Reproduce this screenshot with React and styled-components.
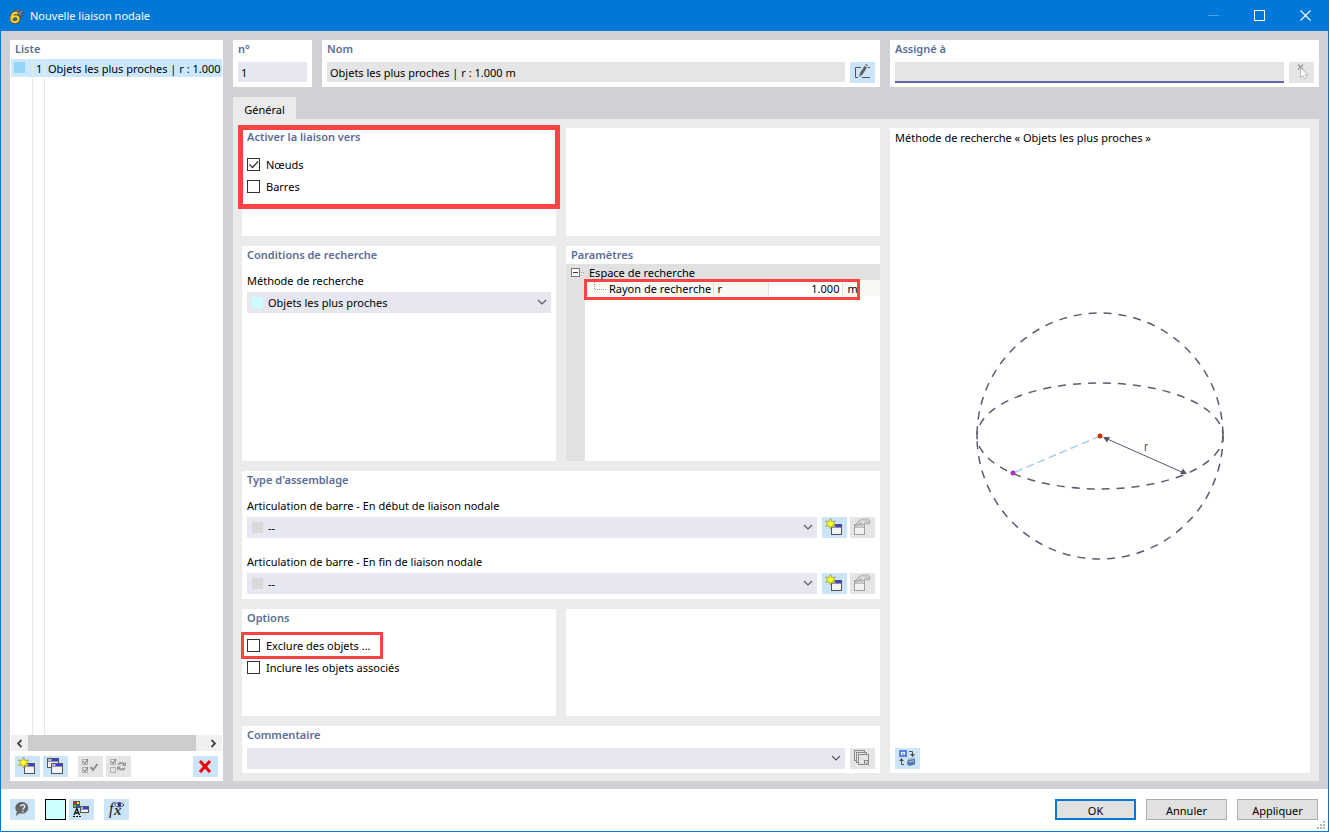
import React from 'react';
import styled, { createGlobalStyle } from 'styled-components';

const GlobalStyle = createGlobalStyle`
  * {
    box-sizing: border-box;
  }

  body {
    margin: 0;
    background: #ffffff;
  }

  body,
  button,
  input,
  select {
    font-family: 'Noto Sans', 'Open Sans', sans-serif;
    font-size: 11px;
    color: #000000;
  }
`;

const Window = styled.div`
  position: relative;
  display: flex;
  flex-direction: column;
  min-width: 960px;
  min-height: 100vh;
  border: 1px solid #0078d7;
  background: #ffffff;
`;

const TitleBar = styled.header`
  display: flex;
  align-items: center;
  height: 30px;
  padding-left: 8px;
  background: #0078d7;
  color: #ffffff;
`;

const WindowTitle = styled.h1`
  flex: 1;
  margin: 0 0 0 5px;
  padding-bottom: 2px;
  font-size: 11px;
  font-weight: normal;
`;

const CaptionButton = styled.button`
  width: 46px;
  height: 30px;
  padding: 0;
  border: 0;
  background: transparent;
  opacity: ${(props) => (props.disabled ? 0.3 : 1)};
`;

const Workspace = styled.div`
  flex: 1;
  display: grid;
  grid-template-columns: 213px minmax(0, 1fr);
  gap: 10px;
  padding: 9px 9px 8px;
  background: #d1d0d5;
`;

const Panel = styled.section`
  position: relative;
  display: flex;
  flex-direction: column;
  min-width: 0;
  padding: 0 5px ${(props) => props.$bottom || 5}px;
  background: #ffffff;
`;

const PanelTitle = styled.h2`
  margin: 0;
  line-height: 18px;
  font-size: 11px;
  font-weight: 600;
  color: #5b6d95;
`;

/* List of links on the left */

const ListPanel = styled(Panel)`
  padding: 0 1px 4px;
`;

const ListTitle = styled(PanelTitle)`
  padding: 0 4px 1px;
`;

const ListRow = styled.div`
  display: grid;
  grid-template-columns: 22px 12px minmax(0, 1fr);
  height: ${(props) => (props.$filler ? 'auto' : '18px')};
  flex: ${(props) => (props.$filler ? 1 : 'none')};
  background: ${(props) => (props.$selected ? '#cce8ff' : '#ffffff')};
  line-height: 20px;
`;

const ListCell = styled.span`
  overflow: hidden;
  padding-left: 3px;
  border-right: 1px solid #e8e8e8;
  white-space: nowrap;

  &:last-child {
    border-right: 0;
  }
`;

const ScrollBar = styled.div`
  display: flex;
  height: 16px;
  margin-bottom: 1px;
  background: #f0f0f0;
`;

const ScrollArrow = styled.button`
  display: flex;
  align-items: center;
  justify-content: center;
  width: 17px;
  padding: 0;
  border: 0;
  background: transparent;
`;

const ScrollTrack = styled.div`
  flex: 1;
`;

const ScrollThumb = styled.div`
  width: 95%;
  height: 100%;
  background: #cdcdcd;
`;

const Toolbar = styled.div`
  display: flex;
  gap: 3px;
  padding: 4px 4px 0;
`;

const Spacer = styled.div`
  flex: ${(props) => (props.$width ? 'none' : 1)};
  width: ${(props) => props.$width || 0}px;
`;

const ToolButton = styled.button`
  flex: none;
  display: block;
  width: 25px;
  height: 21px;
  padding: 0;
  border: 0;
  background: ${(props) => (props.disabled ? '#e5e5e5' : '#cce4f7')};

  svg {
    display: block;
  }
`;

const Swatch = styled.span`
  display: block;
  width: 11px;
  height: 11px;
  margin-top: 3px;
  background: ${(props) => props.$color};
`;

/* Right side */

const Main = styled.main`
  display: flex;
  flex-direction: column;
  min-width: 0;
`;

const HeaderRow = styled.div`
  display: grid;
  grid-template-columns: 79px minmax(0, 558fr) minmax(0, 429fr);
  gap: 10px;
`;

const FieldRow = styled.div`
  display: flex;
  gap: 5px;
  margin-top: ${(props) => (props.$flush ? 0 : 4)}px;
`;

const ButtonPair = styled.div`
  display: flex;
  gap: 3px;
`;

const TextInput = styled.input`
  flex: 1;
  min-width: 0;
  width: 100%;
  height: 20px;
  padding: 1px 3px;
  border: 0;
  border-radius: 0;
  outline: 0;
  background: ${(props) => (props.$muted ? '#e5e5e5' : '#e7e7f2')};
`;

const AssignedInput = styled(TextInput)`
  height: 21px;
  border-bottom: 2px solid #6463ae;
`;

const TabBar = styled.div`
  display: flex;
  margin-top: 10px;
`;

const Tab = styled.button`
  width: 63px;
  height: 22px;
  padding: 3px 0 0;
  border: 0;
  background: #ebebeb;
`;

const TabBody = styled.div`
  flex: 1;
  display: grid;
  grid-template-columns: minmax(0, 638fr) minmax(0, 420fr);
  gap: 10px;
  padding: 9px 9px 8px;
  background: #ebebeb;
`;

const Settings = styled.div`
  display: grid;
  grid-template-columns: repeat(2, minmax(0, 1fr));
  grid-template-rows: 108px minmax(120px, 1fr) auto 107px auto;
  gap: 10px;
`;

const WidePanel = styled(Panel)`
  grid-column: span 2;
`;

const CheckList = styled.div`
  display: flex;
  flex-direction: column;
  align-items: flex-start;
  padding-top: 7px;
`;

const CheckLabel = styled.label`
  position: relative;
  display: flex;
  align-items: center;
  gap: 6px;
  height: 22px;
`;

const CheckWrap = styled.span`
  display: grid;

  > * {
    grid-area: 1 / 1;
  }

  svg {
    pointer-events: none;
    visibility: hidden;
  }

  input:checked + svg {
    visibility: visible;
  }
`;

const CheckInput = styled.input`
  appearance: none;
  width: 13px;
  height: 13px;
  margin: 0;
  border: 1px solid #333333;
  background: #ffffff;
`;

const FieldLabel = styled.label`
  display: block;
  margin-top: ${(props) => props.$top || 6}px;
  line-height: 22px;
`;

const SelectWrap = styled.div`
  position: relative;
  flex: 1;
  min-width: 0;
`;

const SelectBox = styled.select`
  appearance: none;
  display: block;
  width: 100%;
  height: 21px;
  padding: 0 20px 0 21px;
  border: 0;
  border-radius: 0;
  outline: 0;
  background: #e7e7f2;
`;

const SelectSwatch = styled.span`
  position: absolute;
  top: 5px;
  left: 5px;
  width: 11px;
  height: 11px;
  background: ${(props) => props.$color};
  pointer-events: none;
`;

const SelectArrow = styled.svg`
  position: absolute;
  top: 7px;
  right: 4px;
  pointer-events: none;
`;

const Highlight = styled.span`
  position: absolute;
  inset: ${(props) => props.$inset};
  height: ${(props) => props.$height || 'auto'};
  border: ${(props) => props.$width || 3}px solid #ff4343;
  pointer-events: none;
`;

/* Parameter tree */

const ParamPanel = styled(Panel)`
  padding: 0;
`;

const ParamTitle = styled(PanelTitle)`
  padding-left: 5px;
`;

const ParamBody = styled.div`
  flex: 1;
  display: flex;
`;

const Gutter = styled.div`
  width: 19px;
  padding: 4px 0 0 5px;
  background: #e1e1e1;
`;

const ExpandButton = styled.button`
  display: block;
  padding: 0;
  border: 0;
  background: transparent;

  svg {
    display: block;
  }
`;

const ParamTableWrap = styled.div`
  position: relative;
  flex: 1;
  min-width: 0;
`;

const ParamTable = styled.table`
  width: 100%;
  border-collapse: collapse;
  table-layout: fixed;
  line-height: 15px;

  th,
  td {
    height: 16px;
    padding: 1px 4px 0;
    font-weight: normal;
    text-align: left;
    white-space: nowrap;
  }
`;

const GroupHead = styled.th`
  background: #e1e1e1;
`;

const ParamCell = styled.td`
  && {
    padding: ${(props) => (props.$name ? '1px 0 0 3px' : '1px 3px 0 4px')};
    text-align: ${(props) => (props.$right ? 'right' : 'left')};
  }
  border-right: ${(props) => (props.$last ? '0' : '1px solid #e1e1e1')};
  background: ${(props) => (props.$right ? '#ffffff' : '#f9f9f3')};
`;

const NameColumn = styled.col`
  width: 128px;
`;

const SymbolColumn = styled.col`
  width: 55px;
`;

const UnitColumn = styled.col`
  width: 37px;
`;

const TreeLine = styled.svg`
  margin: 0 3px 0 6px;
  vertical-align: top;
`;

/* Preview */

const PreviewTitle = styled.p`
  margin: 0;
  line-height: 20px;
`;

const Diagram = styled.div`
  flex: 1;
  display: flex;
  align-items: center;
  justify-content: center;
  padding-bottom: 24px;
`;

/* Footer */

const Footer = styled.footer`
  display: flex;
  align-items: center;
  gap: 10px;
  padding: 10px 10px 11px 9px;
`;

const ColorButton = styled.button`
  width: 21px;
  height: 21px;
  padding: 0;
  border: 1px solid #000000;
  background: #ccffff;
`;

const DialogButton = styled.button`
  width: 81px;
  height: 21px;
  padding: 1px 0 0;
  border: ${(props) => (props.$primary ? '2px solid #0078d7' : '1px solid #adadad')};
  background: #e1e1e1;
`;

const Grip = styled.svg`
  position: absolute;
  right: 3px;
  bottom: 2px;
`;

const Icon = ({ children }) => (
  <svg width="25" height="21" viewBox="0 0 25 21" fill="none" aria-hidden="true">
    {children}
  </svg>
);

const MiniWindow = ({ x, y, w = 11, h = 11, color = '#555555', bar = '#3a3ae8' }) => (
  <g>
    <rect x={x + 0.5} y={y + 0.5} width={w - 1} height={h - 1} fill="#f2f2f2" stroke={color} />
    <rect x={x + 1} y={y + 1} width={w - 2} height="2" fill="#b8bcd8" />
    <rect x={x + w / 2 - 1.5} y={y + 1} width={w / 2 + 0.5} height="2" fill={bar} />
    <rect x={x + 1} y={y + 3} width={w - 2} height="1" fill={color} fillOpacity="0.6" />
  </g>
);

const NewIcon = () => (
  <Icon>
    <MiniWindow x={9} y={7} />
    <path
      d="M8.500 1.500l1.400 3 3.600-.4-2.200 2.600 2.200 2.600-3.600-.4-1.400 3-1.400-3-3.600.4 2.200-2.600-2.200-2.600 3.600.4z"
      fill="#ffff20"
      stroke="#94944a"
      strokeWidth="0.8"
    />
  </Icon>
);

const CopyIcon = () => (
  <Icon>
    <MiniWindow x={4} y={2} w={12} h={10} />
    <MiniWindow x={8} y={7} w={12} h={11} />
  </Icon>
);

const CheckAllIcon = () => (
  <Icon>
    <path d="M4.500 3.500h5v5h-5zM4.500 11.500h5v5h-5z" stroke="#aaaaaa" />
    <path d="M5.500 5.500l1.500 2 3-4.500M5.500 13.500l1.500 2 3-4.500" stroke="#6d6d6d" />
    <path d="M12.500 11l2.500 3 4.500-6" stroke="#8c8c8c" strokeWidth="2" />
  </Icon>
);

const CheckToggleIcon = () => (
  <Icon>
    <path d="M4.500 3.500h5v5h-5zM4.500 11.500h5v5h-5z" stroke="#b0b0b0" />
    <path d="M5.500 5.500l1.500 2 3-4.500" stroke="#6d6d6d" />
    <path d="M12 8.500c2-2 4.500-2 7 0M19 12c-2 2-4.500 2-7 0" stroke="#9a9a9a" strokeWidth="1.800" />
    <path d="M20 6v4h-4zM11 14.500v-4h4z" fill="#9a9a9a" />
  </Icon>
);

const DeleteIcon = () => (
  <Icon>
    <path d="M7 5l10 11M17 5L7 16" stroke="#f00000" strokeWidth="3" />
  </Icon>
);

const RenameIcon = () => (
  <Icon>
    <path d="M11 5.500H5.500v10H8M18 5.500h2M12 15.500h8" stroke="#555555" />
    <path d="M9 15l1-4 4.500-7 2.500 1.500L12.500 12.500z" fill="#5f5f5f" />
    <path d="M15 3l1-1 2 1-.5 1.500z" fill="#777777" />
  </Icon>
);

const PickIcon = () => (
  <Icon>
    <path d="M9 2.500l5 5M14 2.500l-5 5" stroke="#999999" strokeWidth="1.500" />
    <path
      d="M11.500 5.500v10l2.500-2 1.500 3.500 2-1-1.500-3.200h3z"
      fill="#fafafa"
      stroke="#b0b0b0"
      strokeWidth="0.8"
    />
  </Icon>
);

const EditLibraryIcon = () => (
  <Icon>
    <MiniWindow x={4} y={7} color="#a0a0a0" bar="#d0d0d0" />
    <path d="M6 7l3-3.500 4-1.500h5l2 2v3h-3l-2-1-3 3-1.500-1 1-2-4 2z" fill="#c9c9c9" stroke="#a3a3a3" strokeWidth="0.7" />
    <path d="M10 5l4-1M12 7l3-3" stroke="#eeeeee" />
  </Icon>
);

const NotesIcon = () => (
  <Icon>
    <g fill="#e5e5e5" stroke="#8a8a8a">
      <rect x="4.500" y="2.500" width="10" height="10" />
      <rect x="6.500" y="4.500" width="10" height="10" />
      <rect x="8.500" y="6.500" width="10" height="10" />
      <rect x="14.500" y="12.500" width="4" height="4" />
    </g>
    <path d="M15.500 14.500l1 1 1.500-2" stroke="#8a8a8a" />
  </Icon>
);

const PreviewIcon = () => (
  <Icon>
    <rect x="5" y="3" width="6" height="5" fill="#ffffff" stroke="#4d77dd" strokeWidth="1.800" />
    <path d="M7 4.500v2h2.500v-1H8z" fill="#4d77dd" />
    <path d="M14 3.500h3.500V7M9 16.500H6.500V12" stroke="#505050" />
    <path d="M15 6h5l-2.500 3zM4 13h5l-2.500-3z" fill="#505050" />
    <path d="M13 11l6-1.500 1 2v5l-6 1.500-2-2z" fill="#5577aa" />
    <path d="M13.500 11.500l5.500-1M14 14l5-1" stroke="#bdd0ee" />
  </Icon>
);

const HelpIcon = () => (
  <Icon>
    <path d="M12.500 3a6.300 5.800 0 1 1-2.700 11.200L6 17l.8-4.600A6.300 5.800 0 0 1 12.500 3z" fill="#666666" />
    <path d="M10.800 7.500c0-2.500 4-2.500 4 0 0 1.500-2 1.500-2 3.300M12.800 11.800v1.500" stroke="#cce4f7" strokeWidth="1.500" />
  </Icon>
);

const DisplayIcon = () => (
  <Icon>
    <rect x="4" y="2" width="7" height="7" fill="#555555" />
    <rect x="5" y="3" width="2" height="2" fill="#ff1111" />
    <rect x="8" y="3" width="2" height="2" fill="#ffee22" />
    <rect x="5" y="6" width="2" height="2" fill="#22dd22" />
    <rect x="8" y="6" width="2" height="2" fill="#3355ff" />
    <path d="M5 16l2.800-6.500L10.500 16M6 14h4" stroke="#111111" strokeWidth="1.300" />
    <path d="M4 17.500h8" stroke="#111111" strokeDasharray="2 1" />
    <MiniWindow x={11} y={7} w={9} h={7} />
  </Icon>
);

const FormulaIcon = () => (
  <Icon>
    <text x="5" y="15" fontFamily="Liberation Serif, serif" fontStyle="italic" fontSize="16" fill="#222222">
      f
    </text>
    <text x="10" y="16" fontFamily="Liberation Serif, serif" fontStyle="italic" fontWeight="bold" fontSize="15" fill="#333333">
      x
    </text>
    <path d="M10.500 6c2-3 7-3 9.500 0-2.500 2.500-7.500 2.500-9.500 0z" fill="#ffffff" stroke="#30305a" />
    <circle cx="15.300" cy="5.700" r="1.900" fill="#26269a" />
  </Icon>
);

const AppIcon = () => (
  <svg width="16" height="16" viewBox="0 0 16 16" aria-hidden="true">
    <path d="M3 4l5-3.500 7 3-1 5-3 1.500-3-5z" fill="#3b5878" />
    <path d="M5 3l8 4M9 1.500L7 5M12 2.500L10 8M4 4.500l6-2.500M8 5.500l6-2" stroke="#8fa5bb" strokeWidth="0.6" />
    <path
      d="M8.500 5.500C4 3.500 2.300 8 2.400 11c.1 3.800 6.600 4.200 7.100.2.300-3.300-4.300-4-6.300-1.200"
      fill="none"
      stroke="#5b4a12"
      strokeWidth="3.400"
    />
    <path
      d="M8.500 5.500C4 3.500 2.300 8 2.400 11c.1 3.800 6.600 4.200 7.100.2.300-3.300-4.300-4-6.300-1.200"
      fill="none"
      stroke="#ffd02e"
      strokeWidth="2.200"
    />
  </svg>
);

const CheckBox = ({ label, defaultChecked, children }) => (
  <CheckLabel>
    <CheckWrap>
      <CheckInput type="checkbox" defaultChecked={defaultChecked} />
      <svg width="13" height="13" viewBox="0 0 13 13" fill="none">
        <path d="M2.500 6.500l3 3 5.500-6" stroke="#333333" strokeWidth="1.300" />
      </svg>
    </CheckWrap>
    {label}
    {children}
  </CheckLabel>
);

const DropDown = ({ id, value, swatch }) => (
  <SelectWrap>
    <SelectBox id={id} defaultValue={value}>
      <option value={value}>{value}</option>
    </SelectBox>
    {swatch && <SelectSwatch $color={swatch} />}
    <SelectArrow width="10" height="7" viewBox="0 0 10 7" fill="none">
      <path d="M1 1l4 4 4-4" stroke="#555555" strokeWidth="1.200" />
    </SelectArrow>
  </SelectWrap>
);

const Sphere = () => (
  <svg width="250" height="250" viewBox="-125 -125 250 250" fill="none" role="img" aria-label="Rayon de recherche">
    <g stroke="#5d5b72" strokeWidth="1.500" strokeDasharray="8 7">
      <circle r="123" strokeDashoffset="2" />
      <ellipse rx="123" ry="53" strokeDashoffset="1" />
    </g>
    <path d="M0 0L-87 37" stroke="#a8cdf2" strokeWidth="1.500" strokeDasharray="8 4" />
    <path d="M5 2L84 37" stroke="#58566b" />
    <path d="M3 1l7 0-3 5.500zM87 38l-7 0 3-5.500z" fill="#58566b" />
    <circle r="2.500" fill="#cc3300" />
    <circle cx="-87" cy="37" r="2.500" fill="#b030c8" />
    <text x="44" y="15" fontSize="12" fill="#58566b" fontFamily="Liberation Sans, sans-serif">
      r
    </text>
  </svg>
);

const LinkList = () => (
  <ListPanel>
    <ListTitle>Liste</ListTitle>
    <ListRow $selected>
      <ListCell>
        <Swatch $color="#91d7f5" />
      </ListCell>
      <ListCell>1</ListCell>
      <ListCell>Objets les plus proches | r : 1.000 m</ListCell>
    </ListRow>
    <ListRow $filler>
      <ListCell />
      <ListCell />
      <ListCell />
    </ListRow>
    <ScrollBar>
      <ScrollArrow aria-label="Défiler à gauche">
        <svg width="7" height="9" viewBox="0 0 7 9" fill="none">
          <path d="M5.500 1L2 4.500 5.500 8" stroke="#444444" strokeWidth="1.800" />
        </svg>
      </ScrollArrow>
      <ScrollTrack>
        <ScrollThumb />
      </ScrollTrack>
      <ScrollArrow aria-label="Défiler à droite">
        <svg width="7" height="9" viewBox="0 0 7 9" fill="none">
          <path d="M1.500 1L5 4.500 1.500 8" stroke="#444444" strokeWidth="1.800" />
        </svg>
      </ScrollArrow>
    </ScrollBar>
    <Toolbar>
      <ToolButton aria-label="Nouveau">
        <NewIcon />
      </ToolButton>
      <ToolButton aria-label="Copier">
        <CopyIcon />
      </ToolButton>
      <Spacer $width={4} />
      <ToolButton aria-label="Tout sélectionner" disabled>
        <CheckAllIcon />
      </ToolButton>
      <ToolButton aria-label="Inverser la sélection" disabled>
        <CheckToggleIcon />
      </ToolButton>
      <Spacer />
      <ToolButton aria-label="Supprimer">
        <DeleteIcon />
      </ToolButton>
    </Toolbar>
  </ListPanel>
);

const HingeField = ({ id, label, top }) => (
  <React.Fragment>
    <FieldLabel htmlFor={id} $top={top}>
      {label}
    </FieldLabel>
    <FieldRow $flush>
      <DropDown id={id} value="--" swatch="#d9d9d9" />
      <ButtonPair>
        <ToolButton aria-label="Nouvelle articulation">
          <NewIcon />
        </ToolButton>
        <ToolButton aria-label="Modifier l'articulation" disabled>
          <EditLibraryIcon />
        </ToolButton>
      </ButtonPair>
    </FieldRow>
  </React.Fragment>
);

const Parameters = () => (
  <ParamPanel>
    <ParamTitle>Paramètres</ParamTitle>
    <ParamBody>
      <Gutter>
        <ExpandButton aria-label="Réduire">
          <svg width="14" height="9" viewBox="0 0 14 9" fill="none">
            <rect x="0.500" y="0.500" width="8" height="8" fill="#ffffff" stroke="#777777" />
            <path d="M2 4.500h5" stroke="#333333" />
            <path d="M10 4.500h4" stroke="#a0a0a0" strokeDasharray="1 1" />
          </svg>
        </ExpandButton>
      </Gutter>
      <ParamTableWrap>
        <ParamTable>
          <colgroup>
            <NameColumn />
            <SymbolColumn />
            <col />
            <UnitColumn />
          </colgroup>
          <tbody>
            <tr>
              <GroupHead colSpan="4">Espace de recherche</GroupHead>
            </tr>
            <tr>
              <ParamCell $name>
                <TreeLine width="12" height="12" viewBox="0 0 12 12" fill="none">
                  <path d="M0.500 1v8M1 8.500h11" stroke="#a0a0a0" strokeDasharray="1 1" />
                </TreeLine>
                Rayon de recherche
              </ParamCell>
              <ParamCell>r</ParamCell>
              <ParamCell $right>1.000</ParamCell>
              <ParamCell $last>m</ParamCell>
            </tr>
          </tbody>
        </ParamTable>
        <Highlight $inset="15px 20px auto -1px" $height="21px" />
      </ParamTableWrap>
    </ParamBody>
  </ParamPanel>
);

const App = () => {
  return (
    <React.Fragment>
      <GlobalStyle />
      <Window>
        <TitleBar>
          <AppIcon />
          <WindowTitle>Nouvelle liaison nodale</WindowTitle>
          <CaptionButton aria-label="Réduire" disabled>
            <svg width="11" height="11" viewBox="0 0 11 11">
              <path d="M0 5.500h11" stroke="#ffffff" />
            </svg>
          </CaptionButton>
          <CaptionButton aria-label="Agrandir">
            <svg width="11" height="11" viewBox="0 0 11 11">
              <rect x="0.500" y="0.500" width="10" height="10" fill="none" stroke="#ffffff" />
            </svg>
          </CaptionButton>
          <CaptionButton aria-label="Fermer">
            <svg width="11" height="11" viewBox="0 0 11 11">
              <path d="M0.500 0.500l10 10M10.500 0.500l-10 10" stroke="#ffffff" strokeWidth="1.100" />
            </svg>
          </CaptionButton>
        </TitleBar>

        <Workspace>
          <LinkList />
          <Main>
            <HeaderRow>
              <Panel>
                <PanelTitle as="label" htmlFor="number">
                  n°
                </PanelTitle>
                <FieldRow>
                  <TextInput id="number" defaultValue="1" />
                </FieldRow>
              </Panel>
              <Panel $bottom={4}>
                <PanelTitle as="label" htmlFor="name">
                  Nom
                </PanelTitle>
                <FieldRow>
                  <TextInput id="name" defaultValue="Objets les plus proches | r : 1.000 m" $muted readOnly />
                  <ToolButton aria-label="Modifier le nom">
                    <RenameIcon />
                  </ToolButton>
                </FieldRow>
              </Panel>
              <Panel $bottom={4}>
                <PanelTitle as="label" htmlFor="assigned">
                  Assigné à
                </PanelTitle>
                <FieldRow>
                  <AssignedInput id="assigned" $muted />
                  <ToolButton aria-label="Sélectionner" disabled>
                    <PickIcon />
                  </ToolButton>
                </FieldRow>
              </Panel>
            </HeaderRow>

            <TabBar>
              <Tab>Général</Tab>
            </TabBar>

            <TabBody>
              <Settings>
                <Panel>
                  <PanelTitle>Activer la liaison vers</PanelTitle>
                  <CheckList>
                    <CheckBox label="Nœuds" defaultChecked />
                    <CheckBox label="Barres" />
                  </CheckList>
                  <Highlight $inset="-3px -4px 27px -4px" $width={5} />
                </Panel>
                <Panel />

                <Panel>
                  <PanelTitle>Conditions de recherche</PanelTitle>
                  <FieldLabel htmlFor="method">Méthode de recherche</FieldLabel>
                  <FieldRow $flush>
                    <DropDown id="method" value="Objets les plus proches" swatch="#ccffff" />
                  </FieldRow>
                </Panel>
                <Parameters />

                <WidePanel>
                  <PanelTitle>Type d'assemblage</PanelTitle>
                  <HingeField id="hinge-start" label="Articulation de barre - En début de liaison nodale" />
                  <HingeField id="hinge-end" label="Articulation de barre - En fin de liaison nodale" top={13} />
                </WidePanel>

                <Panel>
                  <PanelTitle>Options</PanelTitle>
                  <CheckList>
                    <CheckBox label="Exclure des objets ...">
                      <Highlight $inset="-2px -12px -3px -6px" />
                    </CheckBox>
                    <CheckBox label="Inclure les objets associés" />
                  </CheckList>
                </Panel>
                <Panel />

                <WidePanel $bottom={4}>
                  <PanelTitle as="label" htmlFor="comment">
                    Commentaire
                  </PanelTitle>
                  <FieldRow>
                    <DropDown id="comment" value="" />
                    <ToolButton aria-label="Commentaires" disabled>
                      <NotesIcon />
                    </ToolButton>
                  </FieldRow>
                </WidePanel>
              </Settings>

              <Panel $bottom={4}>
                <PreviewTitle>Méthode de recherche « Objets les plus proches »</PreviewTitle>
                <Diagram>
                  <Sphere />
                </Diagram>
                <ToolButton aria-label="Changer l'image">
                  <PreviewIcon />
                </ToolButton>
              </Panel>
            </TabBody>
          </Main>
        </Workspace>

        <Footer>
          <ToolButton aria-label="Aide">
            <HelpIcon />
          </ToolButton>
          <ButtonPair>
            <ColorButton aria-label="Couleur" />
            <ToolButton aria-label="Affichage">
              <DisplayIcon />
            </ToolButton>
          </ButtonPair>
          <ToolButton aria-label="Formule">
            <FormulaIcon />
          </ToolButton>
          <Spacer />
          <DialogButton $primary>OK</DialogButton>
          <DialogButton>Annuler</DialogButton>
          <DialogButton>Appliquer</DialogButton>
        </Footer>
        <Grip width="8" height="8" viewBox="0 0 8 8">
          <path d="M6 0h2v2H6zM6 3h2v2H6zM3 3h2v2H3zM6 6h2v2H6zM3 6h2v2H3zM0 6h2v2H0z" fill="#b8b8b8" />
        </Grip>
      </Window>
    </React.Fragment>
  );
};

export default App;
